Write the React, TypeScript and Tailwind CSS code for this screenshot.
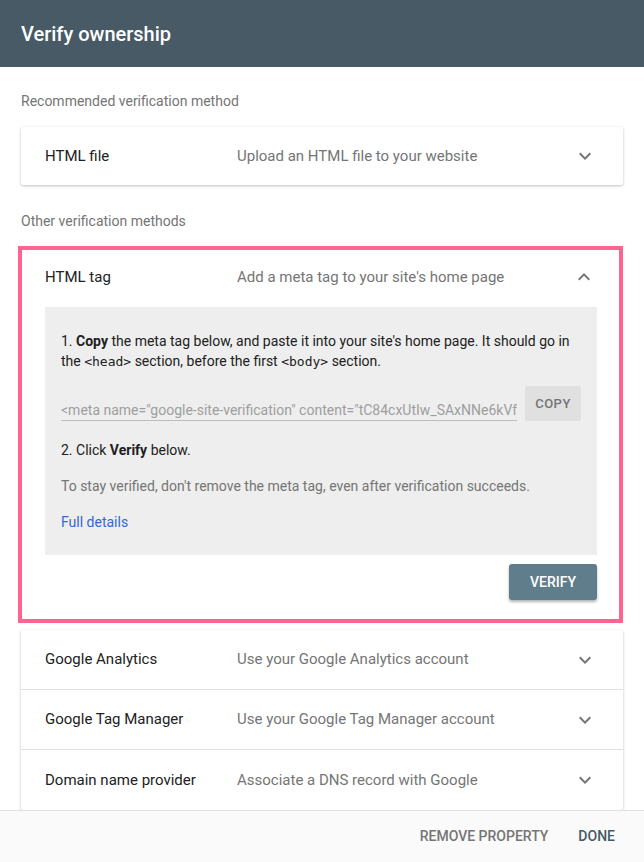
import React from "react";

const Chevron = ({ up = false }: { up?: boolean }) => (
  <svg width="24" height="24" viewBox="0 0 24 24" className={up ? "rotate-180" : ""}>
    <path d="M7.41 8.59 12 13.17l4.59-4.58L18 10l-6 6-6-6 1.41-1.41z" fill="#757575" />
  </svg>
);

const Row = ({ title, desc, up = false, cls = "" }: { title: string; desc: string; up?: boolean; cls?: string }) => (
  <div className={"flex items-center pl-[24px] pr-[26px] " + cls}>
    <div className="w-[192px] text-[15px] text-[#212121]">{title}</div>
    <div className="flex-1 text-[15px] text-[#757575]">{desc}</div>
    <Chevron up={up} />
  </div>
);

export default function App() {
  return (
    <div
      className="w-full h-[862px] flex flex-col overflow-hidden bg-white"
      style={{ fontFamily: "Roboto, 'Liberation Sans', sans-serif" }}
    >
      <div className="h-[67px] shrink-0 bg-[#475a66] px-[21px] flex items-center text-white text-[20px] font-medium">
        Verify ownership
      </div>
      <div className="flex-1 overflow-hidden px-[21px] pt-[24px]">
        <div className="text-[14px] leading-[20px] text-[#757575]">Recommended verification method</div>
        <div className="mt-[16px] bg-white rounded-[2px] shadow-[0_1px_3px_rgba(0,0,0,0.25)]">
          <Row title="HTML file" desc="Upload an HTML file to your website" cls="h-[58px]" />
        </div>
        <div className="mt-[26px] text-[14px] leading-[20px] text-[#757575]">Other verification methods</div>
        <div className="mt-[15px] -ml-[3px] border-[4px] border-[#ff6391] bg-white">
          <div className="flex items-center h-[57px] pb-[3px] pl-[23px] pr-[23px]">
            <div className="w-[192px] text-[15px] text-[#212121]">HTML tag</div>
            <div className="flex-1 text-[15px] text-[#757575]">Add a meta tag to your site's home page</div>
            <Chevron up />
          </div>
          <div className="pl-[23px] pr-[22px] pb-[19px]">
            <div className="bg-[#eeeeee] px-[16px] pt-[24px] pb-[23px] text-[14px] leading-[20px] text-[#212121]">
              <p>
                1. <b className="font-bold">Copy</b> the meta tag below, and paste it into your site's home page. It should go in the{" "}
                <span className="font-['DejaVu_Sans_Mono',monospace] text-[13px]">&lt;head&gt;</span> section, before the first{" "}
                <span className="font-['DejaVu_Sans_Mono',monospace] text-[13px]">&lt;body&gt;</span> section.
              </p>
              <div className="mt-[14px] flex items-start gap-[8px]">
                <div className="flex-1 min-w-0 mt-[14px] border-b border-[#bdbdbd] text-[#9e9e9e] whitespace-nowrap overflow-hidden">
                  &lt;meta name="google-site-verification" content="tC84cxUtIw_SAxNNe6kVfUz1jh2_rGx0Jr8Gm3uTkQ" /&gt;
                </div>
                <div className="w-[56px] h-[35px] shrink-0 bg-[#e0e0e0] rounded-[2px] flex items-center justify-center text-[#757575] text-[13px] font-medium tracking-[0.5px]">
                  COPY
                </div>
              </div>
              <p className="mt-[19px]">
                2. Click <b className="font-bold">Verify</b> below.
              </p>
              <p className="mt-[16px] text-[#757575]">To stay verified, don't remove the meta tag, even after verification succeeds.</p>
              <p className="mt-[16px] text-[#3367d6]">Full details</p>
            </div>
            <div className="flex justify-end mt-[9px]">
              <div className="w-[88px] h-[36px] bg-[#607d8b] rounded-[3px] shadow-[0_2px_3px_rgba(0,0,0,0.3)] flex items-center justify-center text-white text-[14px] font-medium">
                VERIFY
              </div>
            </div>
          </div>
        </div>
        <div className="mt-[7px] bg-white rounded-[2px] shadow-[0_1px_3px_rgba(0,0,0,0.25)]">
          <Row title="Google Analytics" desc="Use your Google Analytics account" cls="h-[60px] border-b border-[#e0e0e0]" />
          <Row title="Google Tag Manager" desc="Use your Google Tag Manager account" cls="h-[60px] border-b border-[#e0e0e0]" />
          <Row title="Domain name provider" desc="Associate a DNS record with Google" cls="h-[60px]" />
        </div>
      </div>
      <div className="h-[52px] shrink-0 bg-[#fafafa] border-t border-[#e0e0e0] flex items-center justify-end pr-[29px] gap-[30px] text-[14px] font-medium">
        <span className="text-[#757575]">REMOVE PROPERTY</span>
        <span className="text-[#455a64]">DONE</span>
      </div>
    </div>
  );
}
